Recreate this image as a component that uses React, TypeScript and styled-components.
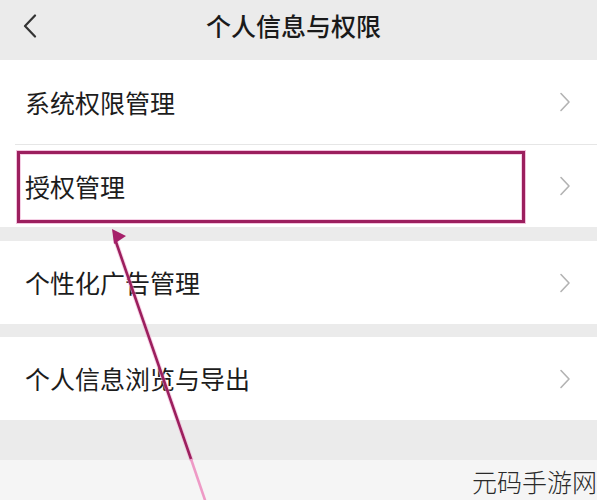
import React from "react";
import styled, { createGlobalStyle } from "styled-components";

const Global = createGlobalStyle`
  html, body { margin: 0; padding: 0; }
  body {
    width: 597px;
    height: 500px;
    overflow: hidden;
    background: #ebebeb;
    font-family: "Noto Sans CJK SC", "Noto Sans", sans-serif;
  }
`;

const Page = styled.div`
  position: relative;
  width: 597px;
  height: 500px;
  display: flex;
  flex-direction: column;
  background: #ebebeb;
  overflow: hidden;
`;

const Header = styled.div`
  position: relative;
  height: 60px;
  box-sizing: border-box;
  padding-bottom: 10px;
  display: flex;
  align-items: center;
  justify-content: center;
  background: #ebebeb;
`;

const BackButton = styled.div`
  position: absolute;
  left: 22px;
  top: 14px;
  width: 16px;
  height: 24px;
  display: flex;
`;

const Title = styled.h1`
  margin: 0 10px 0 0;
  font-size: 25px;
  font-weight: 500;
  line-height: 1;
  color: #1a1a1a;
`;

const Group = styled.div<{ $gapAfter: number }>`
  display: flex;
  flex-direction: column;
  background: #ffffff;
  margin-bottom: ${(p) => p.$gapAfter}px;
`;

const Row = styled.div<{ $h: number }>`
  position: relative;
  height: ${(p) => p.$h}px;
  box-sizing: border-box;
  padding: 0 26px 0 25px;
  display: flex;
  align-items: center;
  justify-content: space-between;
`;

const Label = styled.span`
  font-size: 25px;
  line-height: 1;
  color: #1c1c1c;
  font-weight: 400;
`;

const Divider = styled.div`
  height: 1px;
  margin-left: 15px;
  background: #e6e6e6;
`;

const Highlight = styled.div`
  position: absolute;
  left: 17px;
  top: 6px;
  width: 508px;
  height: 72px;
  box-sizing: border-box;
  border: 3px solid #9c1f5e;
  box-shadow: 0 0 0 1px rgba(226, 120, 180, 0.45),
    inset 0 0 0 1px rgba(226, 120, 180, 0.35);
  pointer-events: none;
`;

const Spacer = styled.div`
  flex: 1;
  background: #ebebeb;
`;

const Footer = styled.div`
  height: 40px;
  background: #f5f5f5;
  display: flex;
  align-items: flex-end;
  justify-content: flex-end;
  padding-bottom: 6px;
  box-sizing: border-box;
`;

const Watermark = styled.span`
  font-size: 25px;
  line-height: 1;
  font-weight: 300;
  color: #2a2a2a;
  margin-right: 0;
`;

const ArrowLayer = styled.svg`
  position: absolute;
  left: 0;
  top: 0;
  pointer-events: none;
`;

const Chevron = () => (
  <svg width="12" height="20" viewBox="0 0 12 20">
    <path d="M2 1.5 L10 10 L2 18.5" fill="none" stroke="#b3b3b3" strokeWidth="1.6" strokeLinecap="round" strokeLinejoin="round" />
  </svg>
);

const items = [
  { label: "系统权限管理" },
  { label: "授权管理" },
  { label: "个性化广告管理" },
  { label: "个人信息浏览与导出" },
];

export default function App() {
  return (
    <>
      <Global />
      <Page>
        <Header>
          <BackButton>
            <svg width="16" height="24" viewBox="0 0 16 24">
              <path d="M13 1.5 L3 12 L13 22.5" fill="none" stroke="#333" strokeWidth="2.2" strokeLinecap="round" strokeLinejoin="round" />
            </svg>
          </BackButton>
          <Title>个人信息与权限</Title>
        </Header>

        <Group $gapAfter={14}>
          <Row $h={84}>
            <Label>{items[0].label}</Label>
            <Chevron />
          </Row>
          <Divider />
          <Row $h={82}>
            <Label>{items[1].label}</Label>
            <Chevron />
            <Highlight />
          </Row>
        </Group>

        <Group $gapAfter={13}>
          <Row $h={83}>
            <Label>{items[2].label}</Label>
            <Chevron />
          </Row>
        </Group>

        <Group $gapAfter={0}>
          <Row $h={83}>
            <Label>{items[3].label}</Label>
            <Chevron />
          </Row>
        </Group>

        <Spacer />
        <Footer>
          <Watermark>元码手游网</Watermark>
        </Footer>

        <ArrowLayer width="597" height="500" viewBox="0 0 597 500">
          <line x1="116" y1="242" x2="191" y2="459" stroke="#f2a9d0" strokeWidth="4.5" strokeLinecap="round" opacity="0.5" />
          <line x1="116" y1="242" x2="191" y2="459" stroke="#9c1f5e" strokeWidth="2.6" strokeLinecap="round" />
          <line x1="191" y1="459" x2="206" y2="503" stroke="#ee9ac6" strokeWidth="2.6" />
          <polygon points="112,229 126,236 114,244" fill="#a6206a" />
        </ArrowLayer>
      </Page>
    </>
  );
}
